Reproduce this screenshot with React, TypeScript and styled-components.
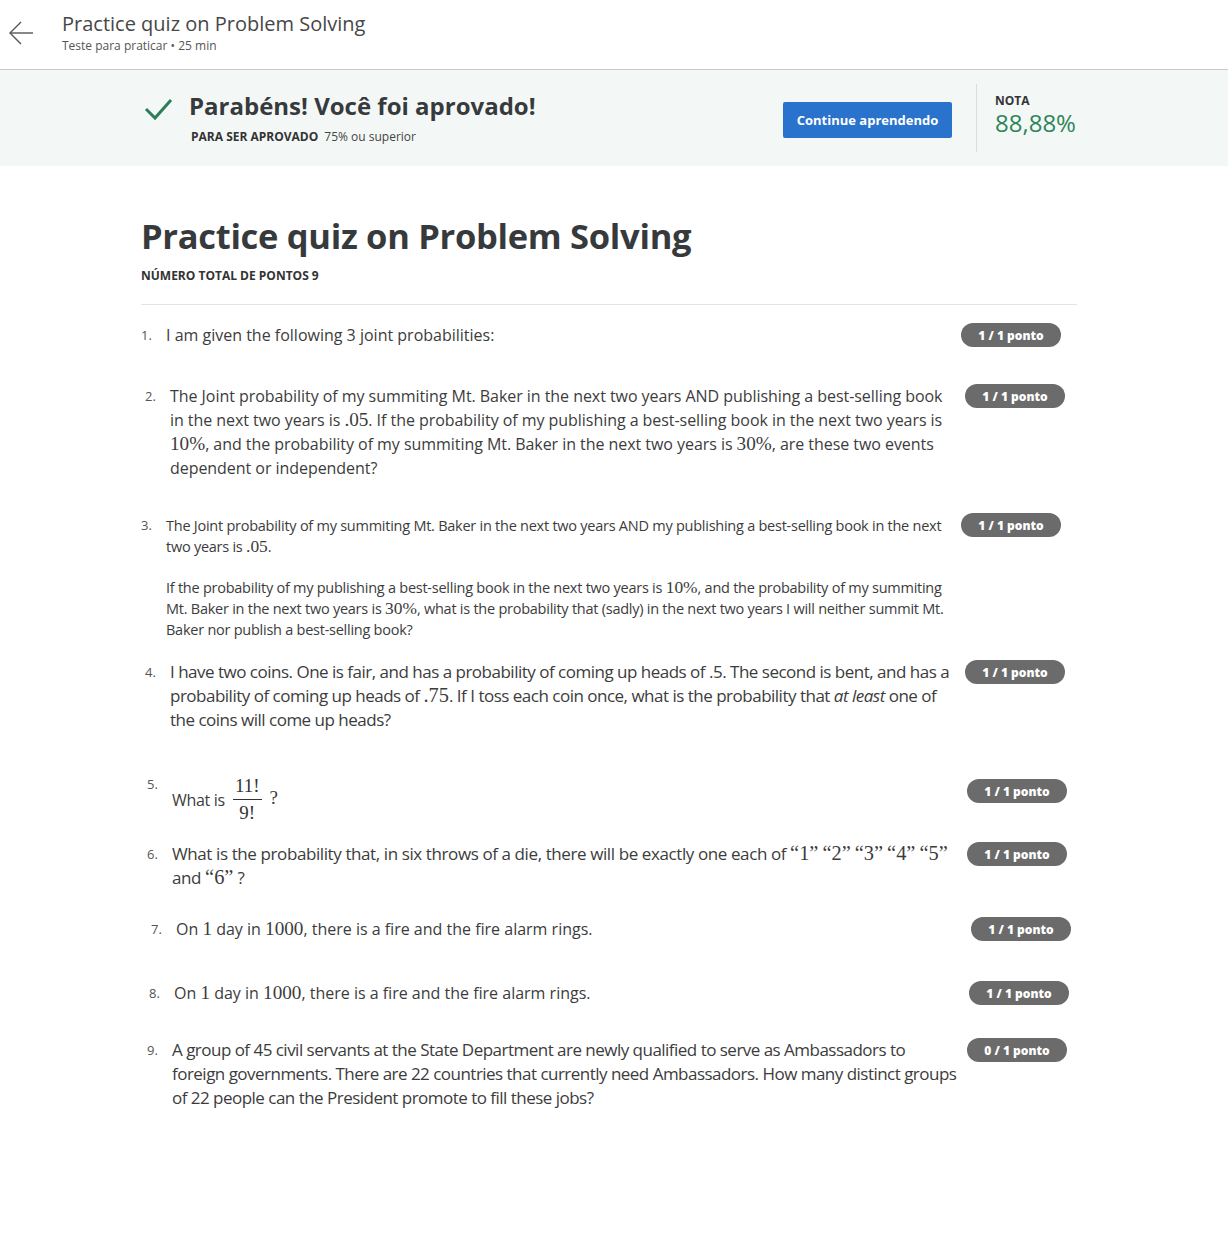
import React from "react";
import styled, { createGlobalStyle } from "styled-components";

const Global = createGlobalStyle`
  html, body { margin: 0; padding: 0; background: #fff; }
  body { font-family: "Open Sans", "Noto Sans", sans-serif; color: #3a3a3a; }
  * { box-sizing: border-box; }
`;

const Page = styled.div`
  width: 1228px;
  min-height: 1240px;
  background: #fff;
`;

const Header = styled.header`
  height: 70px;
  border-bottom: 1px solid #c9c9c9;
  display: flex;
  align-items: flex-start;
  padding: 12px 0 0 8px;
`;

const BackButton = styled.div`
  width: 26px;
  height: 26px;
  margin-top: 8px;
  margin-right: 28px;
  display: flex;
`;

const HeaderText = styled.div`
  display: flex;
  flex-direction: column;
`;

const HeaderTitle = styled.div`
  font-size: 20px;
  line-height: 24px;
  color: #474747;
`;

const HeaderSub = styled.div`
  font-size: 12px;
  line-height: 16px;
  margin-top: 2px;
  color: #555;
`;

const Banner = styled.section`
  height: 96px;
  background: #f3f8f7;
  display: flex;
  padding-left: 141px;
`;

const BannerInner = styled.div`
  width: 936px;
  display: flex;
  align-items: center;
`;

const CheckWrap = styled.div`
  width: 48px;
  height: 60px;
  display: flex;
  align-items: flex-start;
  padding-top: 9px;
  padding-left: 3px;
`;

const PassBlock = styled.div`
  flex: 1;
  display: flex;
  flex-direction: column;
`;

const PassTitle = styled.div`
  font-size: 24px;
  font-weight: 700;
  line-height: 30px;
  color: #373a3c;
`;

const PassReq = styled.div`
  font-size: 12px;
  line-height: 16px;
  margin-top: 8px;
  margin-left: 2px;
  color: #444;
  strong { font-weight: 700; color: #333; margin-right: 6px; }
`;

const ContinueButton = styled.button`
  width: 169px;
  height: 36px;
  border: none;
  border-radius: 2px;
  background: #2a73cc;
  color: #fff;
  font-family: "Open Sans", sans-serif;
  font-weight: 700;
  font-size: 13px;
  margin-right: 24px;
  margin-top: 4px;
`;

const Divider = styled.div`
  width: 1px;
  height: 68px;
  background: #dcdcdc;
  margin-right: 18px;
`;

const Grade = styled.div`
  display: flex;
  flex-direction: column;
  width: 82px;
  padding-bottom: 6px;
`;

const GradeLabel = styled.div`
  font-size: 12px;
  font-weight: 700;
  color: #333;
  line-height: 16px;
`;

const GradeValue = styled.div`
  font-size: 24px;
  line-height: 28px;
  color: #2e8558;
`;

const Main = styled.main`
  padding: 48px 0 0 141px;
`;

const Column = styled.div`
  width: 936px;
`;

const QuizTitle = styled.h1`
  margin: 0;
  font-size: 34.5px;
  font-weight: 700;
  line-height: 44px;
  color: #373a3c;
  letter-spacing: -0.3px;
`;

const TotalPoints = styled.div`
  margin-top: 10px;
  font-size: 12px;
  font-weight: 700;
  color: #333;
  line-height: 16px;
`;

const Rule = styled.hr`
  margin: 20px 0 0;
  border: none;
  border-top: 1px solid #e3e3e3;
`;

const QuestionList = styled.ol`
  list-style: none;
  margin: 0;
  padding: 0;
`;

const QuestionRow = styled.li<{ $indent: number; $top: number }>`
  display: grid;
  grid-template-columns: 17px 787px 100px;
  column-gap: 8px;
  margin-left: ${(p) => p.$indent}px;
  margin-top: ${(p) => p.$top}px;
  align-items: start;
`;

const Num = styled.span<{ $lh: number }>`
  font-size: 13px;
  line-height: ${(p) => p.$lh}px;
  color: #555;
`;

const Body = styled.div<{ $size: number; $lh: number; $squeeze: number }>`
  font-size: ${(p) => p.$size}px;
  line-height: ${(p) => p.$lh}px;
  letter-spacing: ${(p) => p.$squeeze}px;
  color: #3c3c3c;
  p { margin: 0; }
  p + p { margin-top: 20px; }
  em { font-style: italic; }
`;

const Badge = styled.span<{ $top: number }>`
  margin-top: ${(p) => p.$top}px;
  height: 24px;
  width: 100px;
  border-radius: 12px;
  background: #6b6b6b;
  color: #fff;
  font-size: 12px;
  font-weight: 800;
  display: flex;
  align-items: center;
  justify-content: center;
  letter-spacing: 0;
`;

const M = styled.span`
  font-family: "Liberation Serif", "DejaVu Serif", serif;
  font-size: 1.2em;
  line-height: 1;
  letter-spacing: 0;
`;

const FracLine = styled.div`
  display: flex;
  align-items: center;
  gap: 8px;
`;

const Frac = styled.span`
  display: inline-flex;
  flex-direction: column;
  align-items: center;
  font-family: "Liberation Serif", "DejaVu Serif", serif;
  font-size: 19px;
  line-height: 22px;
  color: #333;
  letter-spacing: 0;
`;

const FracTop = styled.span`
  padding: 0 2px 2px;
  border-bottom: 1px solid #333;
`;

const FracBottom = styled.span`
  padding-top: 2px;
`;

const Q = styled.span`
  font-family: "Liberation Serif", "DejaVu Serif", serif;
  font-size: 19px;
  margin-top: -4px;
`;

const ArrowIcon = () => (
  <svg width="26" height="26" viewBox="0 0 26 26" fill="none" stroke="#555" strokeWidth="1.4">
    <line x1="25" y1="13" x2="2" y2="13" />
    <polyline points="13,2 2,13 13,24" />
  </svg>
);

const CheckIcon = () => (
  <svg width="30" height="26" viewBox="0 0 30 26" fill="none" stroke="#2d7d57" strokeWidth="3">
    <polyline points="2,12 11,21 27,3" />
  </svg>
);

type QData = {
  n: number;
  indent: number;
  top: number;
  size: number;
  lh: number;
  squeeze: number;
  badgeTop?: number;
  score: string;
  body: React.ReactNode;
};

const questions: QData[] = [
  {
    n: 1, indent: 0, top: 18, size: 16, lh: 24, squeeze: 0, score: "1 / 1 ponto",
    body: <p>I am given the following 3 joint probabilities:</p>,
  },
  {
    n: 2, indent: 4, top: 37, size: 16, lh: 24, squeeze: -0.05, score: "1 / 1 ponto",
    body: (
      <p>
        The Joint probability of my summiting Mt. Baker in the next two years AND publishing a best-selling book in
        the next two years is <M>.05</M>. If the probability of my publishing a best-selling book in the next two years
        is <M>10%</M>, and the probability of my summiting Mt. Baker in the next two years is <M>30%</M>, are these two
        events dependent or independent?
      </p>
    ),
  },
  {
    n: 3, indent: 0, top: 35, size: 14.5, lh: 21, squeeze: -0.25, badgeTop: -2, score: "1 / 1 ponto",
    body: (
      <>
        <p>
          The Joint probability of my summiting Mt. Baker in the next two years AND my publishing a best-selling book in
          the next two years is <M>.05</M>.
        </p>
        <p>
          If the probability of my publishing a best-selling book in the next two years is <M>10%</M>, and the
          probability of my summiting Mt. Baker in the next two years is <M>30%</M>, what is the probability that
          (sadly) in the next two years I will neither summit Mt. Baker nor publish a best-selling book?
        </p>
      </>
    ),
  },
  {
    n: 4, indent: 4, top: 20, size: 17, lh: 24, squeeze: -0.5, score: "1 / 1 ponto",
    body: (
      <p>
        I have two coins. One is fair, and has a probability of coming up heads of .5. The second is bent, and has a
        probability of coming up heads of <M>.75</M>. If I toss each coin once, what is the probability that{" "}
        <em>at least</em> one of the coins will come up heads?
      </p>
    ),
  },
  {
    n: 5, indent: 6, top: 43, size: 16, lh: 24, squeeze: -0.3, score: "1 / 1 ponto",
    body: null,
  },
  {
    n: 6, indent: 6, top: 18, size: 17, lh: 24, squeeze: -0.4, score: "1 / 1 ponto",
    body: (
      <p>
        What is the probability that, in six throws of a die, there will be exactly one each of <M>“1”</M>{" "}
        <M>“2”</M> <M>“3”</M> <M>“4”</M> <M>“5”</M> and <M>“6”</M> ?
      </p>
    ),
  },
  {
    n: 7, indent: 10, top: 27, size: 16, lh: 24, squeeze: 0, score: "1 / 1 ponto",
    body: (
      <p>
        On <M>1</M> day in <M>1000</M>, there is a fire and the fire alarm rings.
      </p>
    ),
  },
  {
    n: 8, indent: 8, top: 40, size: 16, lh: 24, squeeze: 0, score: "1 / 1 ponto",
    body: (
      <p>
        On <M>1</M> day in <M>1000</M>, there is a fire and the fire alarm rings.
      </p>
    ),
  },
  {
    n: 9, indent: 6, top: 33, size: 17, lh: 24, squeeze: -0.52, score: "0 / 1 ponto",
    body: (
      <p>
        A group of 45 civil servants at the State Department are newly qualified to serve as Ambassadors to foreign
        governments. There are 22 countries that currently need Ambassadors. How many distinct groups of 22 people
        can the President promote to fill these jobs?
      </p>
    ),
  },
];

export default function App() {
  return (
    <Page>
      <Global />
      <Header>
        <BackButton>
          <ArrowIcon />
        </BackButton>
        <HeaderText>
          <HeaderTitle>Practice quiz on Problem Solving</HeaderTitle>
          <HeaderSub>Teste para praticar • 25 min</HeaderSub>
        </HeaderText>
      </Header>
      <Banner>
        <BannerInner>
          <CheckWrap>
            <CheckIcon />
          </CheckWrap>
          <PassBlock>
            <PassTitle>Parabéns! Você foi aprovado!</PassTitle>
            <PassReq>
              <strong>PARA SER APROVADO</strong>75% ou superior
            </PassReq>
          </PassBlock>
          <ContinueButton>Continue aprendendo</ContinueButton>
          <Divider />
          <Grade>
            <GradeLabel>NOTA</GradeLabel>
            <GradeValue>88,88%</GradeValue>
          </Grade>
        </BannerInner>
      </Banner>
      <Main>
        <Column>
          <QuizTitle>Practice quiz on Problem Solving</QuizTitle>
          <TotalPoints>NÚMERO TOTAL DE PONTOS 9</TotalPoints>
          <Rule />
          <QuestionList>
            {questions.map((q) => (
              <QuestionRow key={q.n} $indent={q.indent} $top={q.top}>
                <Num $lh={q.n === 5 ? 18 : q.lh}>{q.n}.</Num>
                <Body $size={q.size} $lh={q.lh} $squeeze={q.squeeze}>
                  {q.n === 5 ? (
                    <FracLine>
                      <span>What is</span>
                      <Frac>
                        <FracTop>11!</FracTop>
                        <FracBottom>9!</FracBottom>
                      </Frac>
                      <Q>?</Q>
                    </FracLine>
                  ) : (
                    q.body
                  )}
                </Body>
                <Badge $top={q.n === 5 ? 4 : q.badgeTop ?? 0}>{q.score}</Badge>
              </QuestionRow>
            ))}
          </QuestionList>
        </Column>
      </Main>
    </Page>
  );
}
